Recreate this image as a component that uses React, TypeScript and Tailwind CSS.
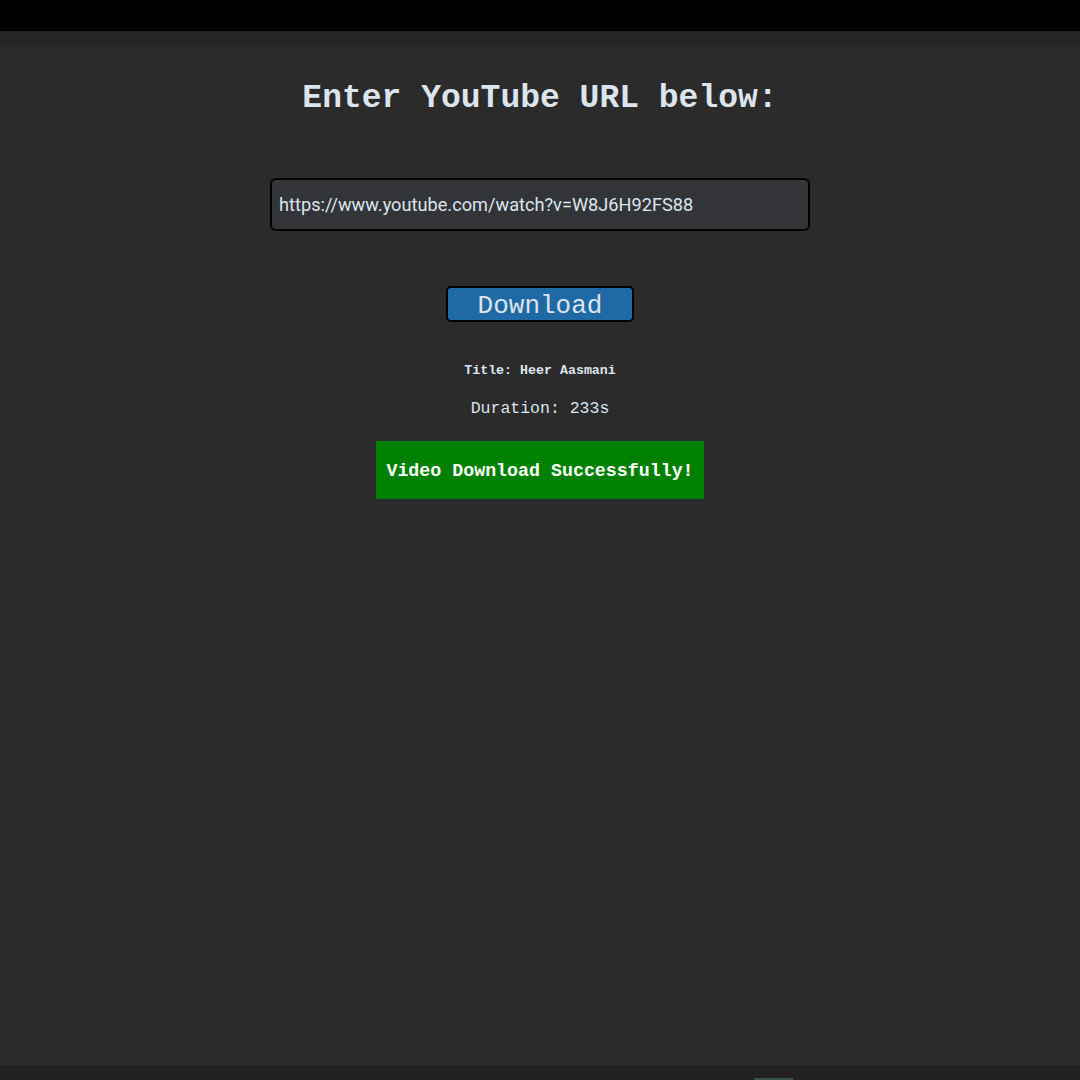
import React from "react";

export default function App() {
  return (
    <div className="h-[1080px] w-[1080px] flex flex-col bg-[#2b2b2b] overflow-hidden">
      <div className="h-[31px] bg-black shrink-0" />
      <div className="h-[14px] bg-[#252525] shrink-0" />
      <main className="flex-1 flex flex-col items-center">
        <h1
          className="mt-[34px] h-[40px] leading-[40px] text-[33px] font-bold text-[#dce4ee]"
          style={{ fontFamily: '"Liberation Mono", monospace' }}
        >
          Enter YouTube URL below:
        </h1>
        <div className="mt-[59px] w-[540px] h-[53px] rounded-[6px] border-2 border-black bg-[#333437] flex items-center px-[7px]">
          <span
            className="text-[18.2px] text-[#dce4ee]"
            style={{ fontFamily: 'Roboto, sans-serif' }}
          >
            https://www.youtube.com/watch?v=W8J6H92FS88
          </span>
        </div>
        <button
          className="mt-[55px] w-[188px] h-[36px] pt-[5px] rounded-[5px] border-2 border-black bg-[#1f6aa5] flex items-center justify-center text-[26px] text-[#dce4ee]"
          style={{ fontFamily: '"Liberation Mono", monospace' }}
        >
          Download
        </button>
        <div
          className="mt-[39px] h-[20px] leading-[20px] text-[13.3px] font-bold text-[#dce4ee]"
          style={{ fontFamily: '"Liberation Mono", monospace' }}
        >
          Title: Heer Aasmani
        </div>
        <div
          className="mt-[18px] h-[20px] leading-[20px] text-[16.5px] text-[#dce4ee]"
          style={{ fontFamily: '"Liberation Mono", monospace' }}
        >
          Duration: 233s
        </div>
        <div
          className="mt-[22px] w-[328px] h-[58px] pt-[3px] bg-[#008000] flex items-center justify-center text-[18.3px] font-bold text-white"
          style={{ fontFamily: '"Liberation Mono", monospace' }}
        >
          Video Download Successfully!
        </div>
      </main>
      <div className="h-[15px] bg-[#222222] shrink-0 relative">
        <div className="absolute left-[754px] bottom-0 w-[39px] h-[2px] bg-[#3a5249]" />
      </div>
    </div>
  );
}
